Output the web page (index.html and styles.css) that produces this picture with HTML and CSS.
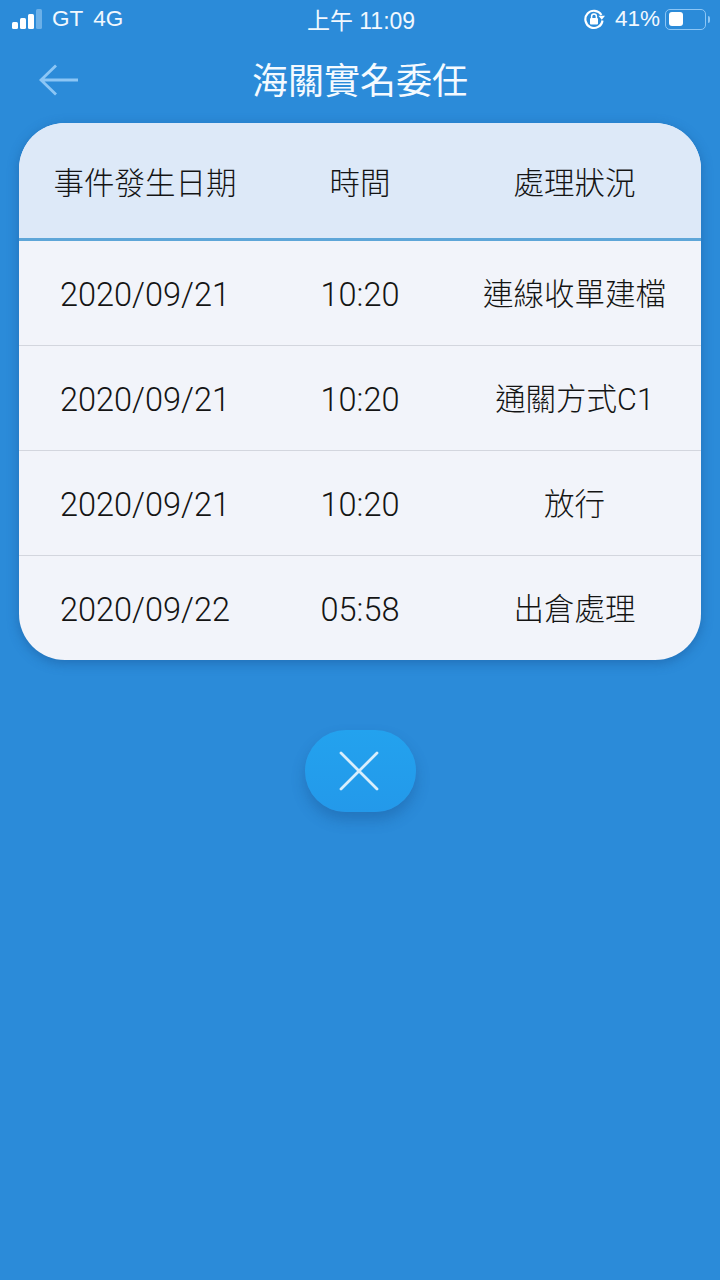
FILE: index.html
```html
<!DOCTYPE html>
<html lang="zh-Hant">
<head>
  <meta charset="utf-8">
  <title>海關實名委任</title>
  <link rel="stylesheet" href="styles.css">
</head>
<body>
  <div class="statusbar">
    <div class="status-left">
      <span class="signal"><i></i><i></i><i></i><i class="off"></i></span>
      <span>GT</span>
      <span>4G</span>
    </div>
    <div class="status-time">上午 11:09</div>
    <div class="status-right">
      <svg class="lock" viewBox="0 0 22 22" width="22" height="22">
        <path d="M18.4 7A8.6 8.600 0 1 0 19.500 12.500" fill="none" stroke="#fff" stroke-width="2.200"/>
        <path d="M15.400 7.800h6.600l-3.200 4z" fill="#fff"/>
        <rect x="7" y="10" width="8" height="6.400" rx="1" fill="#fff"/>
        <path d="M8.600 10V8.400a2.400 2.400 0 0 1 4.800 0V10" fill="none" stroke="#fff" stroke-width="1.500"/>
      </svg>
      <span class="percent">41%</span>
      <span class="battery"><span class="battery-fill"></span></span>
      <span class="battery-tip"></span>
    </div>
  </div>

  <header class="titlebar">
    <svg class="back" viewBox="0 0 40 32" width="40" height="32">
      <path d="M39 16H2M17 1.500L2 16l15 14.500" fill="none" stroke="#8cc6f5" stroke-width="2.800"/>
    </svg>
    <h1>海關實名委任</h1>
  </header>

  <section class="card">
    <div class="row head">
      <span class="txt">事件發生日期</span>
      <span class="txt">時間</span>
      <span class="txt">處理狀況</span>
    </div>
    <div class="row">
      <span class="num">2020/09/21</span>
      <span class="num">10:20</span>
      <span class="txt">連線收單建檔</span>
    </div>
    <div class="row">
      <span class="num">2020/09/21</span>
      <span class="num">10:20</span>
      <span class="txt">通關方式C1</span>
    </div>
    <div class="row">
      <span class="num">2020/09/21</span>
      <span class="num">10:20</span>
      <span class="txt">放行</span>
    </div>
    <div class="row">
      <span class="num">2020/09/22</span>
      <span class="num">05:58</span>
      <span class="txt">出倉處理</span>
    </div>
  </section>

  <button class="close" type="button" aria-label="關閉">
    <svg viewBox="0 0 40 40" width="40" height="40">
      <path d="M2 2l36 36M38 2L2 38" fill="none" stroke="#d8eefc" stroke-width="2.800" stroke-linecap="round"/>
    </svg>
  </button>
</body>
</html>
```

FILE: styles.css
```css
* {
  box-sizing: border-box;
}

body {
  margin: 0;
  height: 1280px;
  overflow: hidden;
  background: #2b8bd9;
  color: #fff;
  font-family: Roboto, "Noto Sans CJK TC", sans-serif;
}

/* status bar */
.statusbar {
  height: 38px;
  padding: 0 10px 0 12px;
  display: grid;
  grid-template-columns: 1fr auto 1fr;
  align-items: center;
  font-family: "Liberation Sans", "Noto Sans CJK TC", sans-serif;
  font-size: 22.500px;
  color: #f1f8fe;
}

.status-left {
  display: flex;
  align-items: center;
  gap: 10px;
}

.status-time {
  font-size: 23px;
}

.signal {
  display: flex;
  align-items: flex-end;
  gap: 2px;
  height: 20px;
}

.signal i {
  display: block;
  width: 6px;
  border-radius: 1.500px;
  background: #fff;
}

.signal i:nth-child(1) { height: 7px; }
.signal i:nth-child(2) { height: 11px; }
.signal i:nth-child(3) { height: 15px; }
.signal i:nth-child(4) { height: 20px; }

.signal i.off {
  background: #6bb0e8;
}

.status-right {
  display: flex;
  align-items: center;
  justify-content: flex-end;
}

.lock {
  margin-right: 10px;
}

.percent {
  margin-right: 5px;
}

.battery {
  width: 41px;
  height: 21px;
  padding: 2.500px 3px;
  border: 1.500px solid #8cc6f5;
  border-radius: 5px;
  display: block;
}

.battery-fill {
  display: block;
  width: 14px;
  height: 100%;
  border-radius: 3px;
  background: #fff;
}

.battery-tip {
  width: 2px;
  height: 7px;
  margin-left: 2px;
  border-radius: 0 2px 2px 0;
  background: #8cc6f5;
}

/* title */
.titlebar {
  height: 85px;
  padding-top: 3px;
  position: relative;
  display: flex;
  align-items: center;
  justify-content: center;
}

.titlebar h1 {
  margin: 0;
  font-size: 36px;
  font-weight: 400;
  line-height: 1;
  color: #f4faff;
}

.back {
  position: absolute;
  left: 39px;
  top: 26px;
}

/* table card */
.card {
  width: 682px;
  margin: 0 19px;
  border-radius: 46px;
  overflow: hidden;
  background: #f2f4fa;
  box-shadow: 0 3px 12px rgba(20, 70, 130, 0.4);
  color: #141414;
}

.row {
  display: grid;
  grid-template-columns: 252px 178px 251px;
  height: 105px;
  align-items: center;
  justify-items: center;
  font-weight: 300;
  border-bottom: 1px solid #d3d6de;
}

.row:last-child {
  border-bottom: 0;
  height: 104px;
}

.row.head {
  height: 118px;
  padding-top: 2px;
  background: #dde9f8;
  border-bottom: 3px solid #5ea6d8;
}

.num {
  padding-top: 4px;
  font-size: 32.500px;
}

.txt {
  padding-bottom: 2px;
  font-size: 30.500px;
}

/* close button */
.close {
  display: flex;
  align-items: center;
  justify-content: center;
  width: 111px;
  height: 82px;
  margin: 70px auto 0;
  padding: 0 2px 0 0;
  border: 0;
  border-radius: 41px;
  background: linear-gradient(#23a2ee, #2399ea);
  box-shadow: 0 8px 14px rgba(20, 70, 130, 0.32);
}
```
